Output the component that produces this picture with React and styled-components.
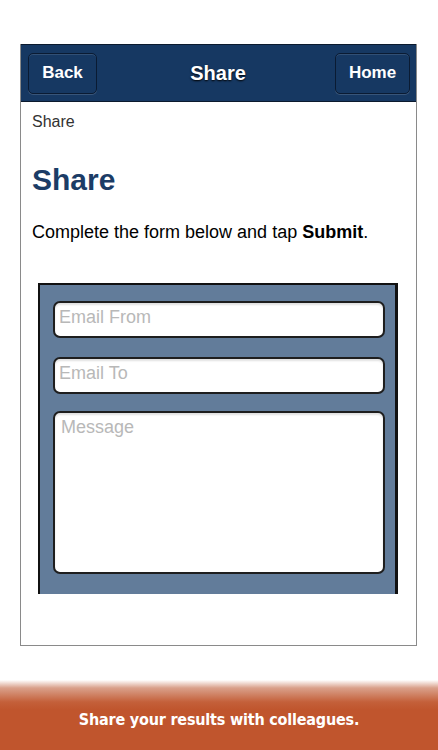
import React from 'react';
import styled, {createGlobalStyle} from 'styled-components';

const Global = createGlobalStyle`
  html, body {
    margin: 0;
    padding: 0;
    background: #ffffff;
  }
  body {
    font-family: "Liberation Sans", Arial, sans-serif;
    width: 438px;
    height: 750px;
    overflow: hidden;
  }
`;

const Screen = styled.div`
  display: flex;
  flex-direction: column;
  height: 750px;
`;

const Phone = styled.div`
  margin: 44px 0 0 20px;
  width: 395px;
  height: 601px;
  border: 1px solid #8a8a8a;
  border-top: none;
  display: flex;
  flex-direction: column;
  overflow: hidden;
`;

const Header = styled.div`
  height: 58px;
  margin: 0 -1px;
  background: #163862;
  border-top: 1px solid #0b1a2e;
  border-bottom: 1px solid #0b1a2e;
  box-sizing: border-box;
  display: flex;
  align-items: center;
  justify-content: space-between;
  padding: 0 7px 0 8px;
`;

const NavButton = styled.button`
  width: ${(p) => p.w}px;
  height: 41px;
  background: #163862;
  border: 1px solid #0a1b33;
  border-radius: 5px;
  box-shadow: inset 0 1px 0 rgba(255, 255, 255, 0.12), 0 1px 0 rgba(255, 255, 255, 0.15);
  color: #ffffff;
  font-family: "Liberation Sans", Arial, sans-serif;
  font-weight: bold;
  font-size: 17px;
  padding: 0;
`;

const HeaderTitle = styled.div`
  color: #ffffff;
  font-weight: bold;
  font-size: 20px;
  text-shadow: 0 1px 2px #000000;
  margin-left: 4px;
`;

const Body = styled.div`
  padding: 10px 0 0 11px;
  display: flex;
  flex-direction: column;
`;

const Crumb = styled.div`
  font-size: 16px;
  color: #333333;
  line-height: 20px;
`;

const Heading = styled.h1`
  margin: 31px 0 0;
  font-size: 30px;
  line-height: 34px;
  color: #1b3c66;
`;

const Intro = styled.p`
  margin: 24px 0 0;
  font-size: 18px;
  line-height: 22px;
  color: #000000;
`;

const Panel = styled.div`
  margin: 40px 0 0 6px;
  width: 360px;
  box-sizing: border-box;
  background: #627c9a;
  border: 2px solid #111111;
  border-right-width: 3px;
  border-bottom: none;
  padding: 16px 10px 20px 13px;
  display: flex;
  flex-direction: column;
`;

const Field = styled.div`
  height: ${(p) => p.h}px;
  margin-top: ${(p) => p.gap}px;
  background: #ffffff;
  border: 2px solid #1e1e1e;
  border-radius: 7px;
  box-sizing: border-box;
  box-shadow: inset 0 2px 2px rgba(0, 0, 0, 0.12);
  padding: ${(p) => (p.multi ? '3px 0 0 6px' : '3px 0 0 4px')};
  color: #b8b8b8;
  font-size: 18px;
  line-height: 22px;
`;

const Footer = styled.div`
  margin-top: 34px;
  flex: 1;
  background: linear-gradient(to bottom, #ffffff 0px, #d9a08a 8px, #c4603a 22px, #c0552d 30px, #c0552d 100%);
  display: flex;
  align-items: center;
  justify-content: center;
  padding-top: 8px;
`;

const Tagline = styled.div`
  color: #ffffff;
  font-family: "DejaVu Sans Condensed", "DejaVu Sans", sans-serif;
  font-weight: bold;
  font-size: 16px;
  letter-spacing: -0.2px;
`;

export default function App() {
  return (
    <Screen>
      <Global/>
      <Phone>
        <Header>
          <NavButton w={69}>Back</NavButton>
          <HeaderTitle>Share</HeaderTitle>
          <NavButton w={75}>Home</NavButton>
        </Header>
        <Body>
          <Crumb>Share</Crumb>
          <Heading>Share</Heading>
          <Intro>Complete the form below and tap <b>Submit</b>.</Intro>
          <Panel>
            <Field h={37} gap={0}>Email From</Field>
            <Field h={37} gap={19}>Email To</Field>
            <Field h={163} gap={17} multi>Message</Field>
          </Panel>
        </Body>
      </Phone>
      <Footer>
        <Tagline>Share your results with colleagues.</Tagline>
      </Footer>
    </Screen>
  );
}
